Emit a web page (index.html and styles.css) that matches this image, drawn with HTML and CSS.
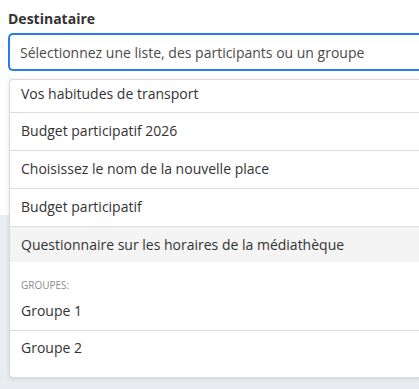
FILE: index.html
```html
<!DOCTYPE html>
<html lang="fr">
<head>
  <meta charset="UTF-8" />
  <meta name="viewport" content="width=device-width, initial-scale=1" />
  <title>Destinataire</title>
  <link rel="stylesheet" href="styles.css">
</head>
<body>
  <div class="panel">
    <div class="field">
      <label for="dest">Destinataire</label>
      <input id="dest" type="text" placeholder="Sélectionnez une liste, des participants ou un groupe" />
    </div>
    <div class="dropdown">
      <ul class="list">
        <li class="first">Vos habitudes de transport</li>
        <li>Budget participatif 2026</li>
        <li>Choisissez le nom de la nouvelle place</li>
        <li>Budget participatif</li>
        <li class="active">Questionnaire sur les horaires de la médiathèque</li>
      </ul>
      <div class="group-title">Groupes:</div>
      <ul class="list groups">
        <li>Groupe 1</li>
        <li>Groupe 2</li>
      </ul>
    </div>
  </div>
  <div class="below"></div>
</body>
</html>
```

FILE: styles.css
```css
html, body {
  margin: 0;
  overflow: hidden;
}
body {
  font-family: "Open Sans", "Liberation Sans", sans-serif;
  color: #333;
  background-color: #e9edf1;
  height: 389px;
}
.panel {
  position: relative;
  background-color: #fff;
  height: 215px;
}
.field {
  padding: 9px 0 0 8px;
}
label {
  display: block;
  font-size: 14px;
  font-weight: bold;
  line-height: 20px;
  color: #333;
  margin-bottom: 4px;
}
/* the field and the menu run on past the right edge of the frame */
input[type="text"] {
  box-sizing: border-box;
  width: 100%;
  height: 38px;
  padding: 0 10px;
  border: 2px solid #2a7bf3;
  border-right: none;
  border-radius: 5px 0 0 5px;
  font-family: inherit;
  font-size: 14px;
  color: #444;
  outline: none;
}
input::placeholder {
  color: #4a4a4a;
  opacity: 1;
}
.dropdown {
  position: absolute;
  top: 79px;
  left: 9px;
  right: 0;
  background-color: #fff;
  border: 1px solid #d9d9d9;
  border-right: none;
  border-radius: 4px 0 0 4px;
  box-shadow: 0 1px 4px rgba(0,0,0,0.12);
  padding-bottom: 10px;
  z-index: 2;
}
.list {
  list-style: none;
  margin: 0;
  padding: 0;
}
.list li {
  font-size: 14px;
  line-height: 20px;
  padding: 8px 11px 9px;
  border-bottom: 1px solid #ddd;
}
.list li.first {
  padding-top: 4px;
  padding-bottom: 8px;
}
.list li.active {
  background-color: #f4f4f4;
  border-bottom: none;
  padding-bottom: 7px;
}
.list li:last-child {
  border-bottom: none;
}
.group-title {
  font-size: 10px;
  line-height: 16px;
  text-transform: uppercase;
  color: #8a8a8a;
  padding: 15px 11px 0;
}
.groups li {
  padding-top: 8px;
}
.groups li:last-child {
  padding-top: 7px;
}
```
